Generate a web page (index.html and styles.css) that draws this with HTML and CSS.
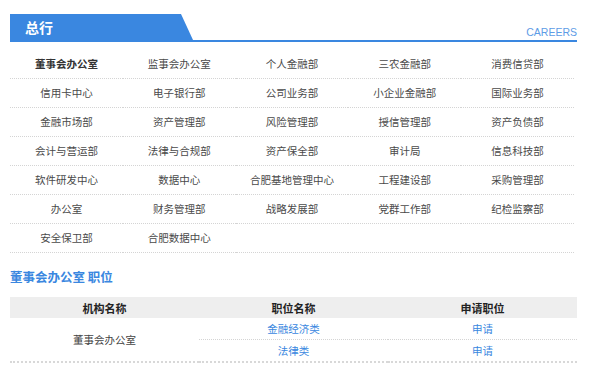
FILE: index.html
```html
<!DOCTYPE html>
<html lang="zh-CN">
<head>
<meta charset="utf-8">
<title>总行</title>
<link rel="stylesheet" href="styles.css">
</head>
<body>
<div class="page">
  <div class="head">
    <div class="tab">总行</div>
    <div class="en">CAREERS</div>
  </div>
  <ul class="depts">
    <li class="on">董事会办公室</li>
    <li>监事会办公室</li>
    <li>个人金融部</li>
    <li>三农金融部</li>
    <li>消费信贷部</li>
    <li>信用卡中心</li>
    <li>电子银行部</li>
    <li>公司业务部</li>
    <li>小企业金融部</li>
    <li>国际业务部</li>
    <li>金融市场部</li>
    <li>资产管理部</li>
    <li>风险管理部</li>
    <li>授信管理部</li>
    <li>资产负债部</li>
    <li>会计与营运部</li>
    <li>法律与合规部</li>
    <li>资产保全部</li>
    <li>审计局</li>
    <li>信息科技部</li>
    <li>软件研发中心</li>
    <li>数据中心</li>
    <li>合肥基地管理中心</li>
    <li>工程建设部</li>
    <li>采购管理部</li>
    <li>办公室</li>
    <li>财务管理部</li>
    <li>战略发展部</li>
    <li>党群工作部</li>
    <li>纪检监察部</li>
    <li>安全保卫部</li>
    <li>合肥数据中心</li>
    <li class="empty"></li>
    <li class="empty"></li>
    <li class="empty"></li>
  </ul>
  <h2 class="title">董事会办公室 职位</h2>
  <table class="jobs">
    <thead>
      <tr><th>机构名称</th><th>职位名称</th><th>申请职位</th></tr>
    </thead>
    <tbody>
      <tr class="r1">
        <td class="org" rowspan="2">董事会办公室</td>
        <td><a href="#">金融经济类</a></td>
        <td><a href="#">申请</a></td>
      </tr>
      <tr class="r2">
        <td><a href="#">法律类</a></td>
        <td><a href="#">申请</a></td>
      </tr>
    </tbody>
  </table>
</div>
</body>
</html>
```

FILE: styles.css
```css
html, body {
  margin: 0;
  padding: 0;
  background: #ffffff;
}
body {
  font-family: "Noto Sans CJK SC", "Liberation Sans", sans-serif;
  font-size: 10.5px;
  color: #4a4a4a;
}
.page {
  width: 567px;
  padding: 14px 0 0 10px;
}
.head {
  display: flex;
  justify-content: space-between;
  align-items: flex-end;
  height: 26px;
  border-bottom: 2px solid #3a87e0;
}
.tab {
  width: 183px;
  height: 26px;
  box-sizing: border-box;
  padding-left: 15px;
  background: #3a87e0;
  color: #fff;
  font-size: 14px;
  font-weight: bold;
  line-height: 26px;
  clip-path: polygon(0 0, 171px 0, 183px 100%, 0 100%);
}
.en {
  font-family: "Liberation Sans", Arial, sans-serif;
  font-size: 10.5px;
  color: #5d9ce6;
  line-height: 12px;
  margin-bottom: 2px;
}
.depts {
  list-style: none;
  margin: 8px 0 0 0;
  padding: 0;
  width: 564px;
  display: grid;
  grid-template-columns: repeat(5, 1fr);
}
.depts li {
  height: 28px;
  line-height: 28px;
  text-align: center;
  border-bottom: 1px dotted #d4d4d4;
  white-space: nowrap;
}
.depts li.on {
  font-weight: bold;
  color: #333;
}
.title {
  margin: 14px 0 0 0;
  font-size: 12.5px;
  line-height: 20px;
  font-weight: bold;
  color: #3a87e0;
}
.jobs {
  margin-top: 10px;
  width: 567px;
  border-collapse: collapse;
  table-layout: fixed;
  font-size: 10.5px;
}
.jobs th {
  background: #eeeeee;
  height: 21px;
  padding: 0;
  font-size: 11px;
  font-weight: bold;
  color: #222;
  text-align: center;
}
.jobs td {
  height: 21px;
  padding: 0;
  text-align: center;
  line-height: 21px;
}
.jobs .r1 td {
  border-bottom: 1px dotted #d4d4d4;
}
.jobs .r1 td.org,
.jobs .r2 td {
  border-bottom: 2px dotted #d8d8d8;
}
.jobs .org {
  color: #444;
}
.jobs a {
  color: #3a87e0;
  text-decoration: none;
}
```
